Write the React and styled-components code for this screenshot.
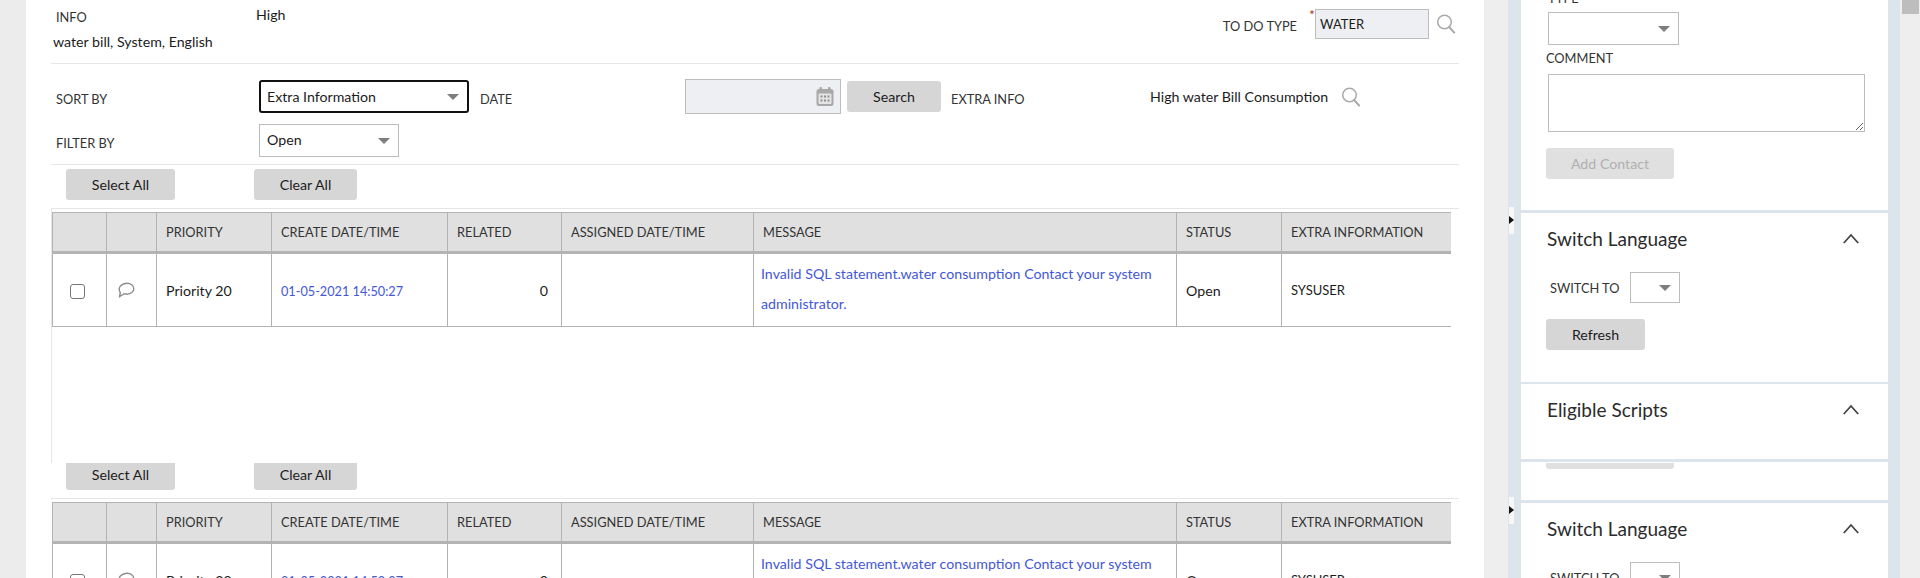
import React from "react";
import styled, { createGlobalStyle } from "styled-components";

const GlobalStyle = createGlobalStyle`
  html, body {
    margin: 0;
    padding: 0;
    height: 578px;
    overflow: hidden;
    background: #fff;
  }
  * { box-sizing: border-box; }
`;

const columns = [
  { title: "", width: 54 },
  { title: "", width: 50 },
  { title: "PRIORITY", width: 115 },
  { title: "CREATE DATE/TIME", width: 176 },
  { title: "RELATED", width: 114 },
  { title: "ASSIGNED DATE/TIME", width: 192 },
  { title: "MESSAGE", width: 423 },
  { title: "STATUS", width: 105 },
  { title: "EXTRA INFORMATION", width: 170 },
];

function SearchIcon({ $top }) {
  return (
    <SearchSvg $top={$top} viewBox="0 0 20 20" fill="none" stroke="#a9a9a9" strokeWidth="1.5">
      <circle cx="8.5" cy="8" r="6.8" />
      <path d="M13.2 13l5 5.6" strokeWidth="2" strokeLinecap="round" />
    </SearchSvg>
  );
}

function CalendarIcon() {
  return (
    <CalendarSvg viewBox="0 0 18 20">
      <rect x="0.5" y="2.5" width="17" height="17" rx="2.5" fill="#a8a8a8" />
      <rect x="3.5" y="0.5" width="2.5" height="4" rx="1" fill="#a8a8a8" />
      <rect x="12" y="0.5" width="2.5" height="4" rx="1" fill="#a8a8a8" />
      <rect x="2.5" y="7" width="13" height="10.5" rx="1" fill="#e4e4e4" />
      <path
        d="M4.5 9h2v2h-2zM8 9h2v2H8zM11.5 9h2v2h-2zM4.5 13h2v2h-2zM8 13h2v2H8zM11.5 13h2v2h-2z"
        fill="#8f8f8f"
      />
    </CalendarSvg>
  );
}

function CommentIcon() {
  return (
    <CommentSvg viewBox="0 0 18 16" fill="none" stroke="#8c8c8c" strokeWidth="1.4">
      <path d="M10 1.200c3.700 0 6.800 2.500 6.800 5.500s-3.100 5.500-6.800 5.500c-1 0-1.900-.2-2.800-.5L2.600 14.600l.7-4C2.500 9.500 2.200 8 2.200 6.700 2.200 3.700 6.300 1.200 10 1.200z" />
    </CommentSvg>
  );
}

function Chevron() {
  return (
    <ChevronSvg viewBox="0 0 16 11" fill="none" stroke="#444" strokeWidth="1.8">
      <path d="M0.8 10L8 2l7.200 8" />
    </ChevronSvg>
  );
}

function TodoTable() {
  return (
    <Table>
      <colgroup>
        {columns.map((col, i) => (
          <col key={i} style={{ width: col.width }} />
        ))}
      </colgroup>
      <thead>
        <tr>
          {columns.map((col, i) => (
            <HeadCell key={i}>{col.title}</HeadCell>
          ))}
        </tr>
      </thead>
      <tbody>
        <tr>
          <CheckCell>
            <Check />
          </CheckCell>
          <CommentCell>
            <CommentIcon />
          </CommentCell>
          <Cell>Priority 20</Cell>
          <Cell>
            <DateLink>01-05-2021 14:50:27</DateLink>
          </Cell>
          <Cell $right>0</Cell>
          <Cell />
          <MessageCell>
            <LinkText>
              Invalid SQL statement.water consumption Contact your system
              administrator.
            </LinkText>
          </MessageCell>
          <Cell>Open</Cell>
          <UserCell>SYSUSER</UserCell>
        </tr>
      </tbody>
    </Table>
  );
}

function SwitchLanguage() {
  return (
    <PanelHead>
      <PanelTitle>Switch Language</PanelTitle>
      <Chevron />
    </PanelHead>
  );
}

function App() {
  return (
    <Page>
      <GlobalStyle />
      <Gutter />
      <Main>
        <TopSection>
          <InfoBlock>
            <InfoRow>
              <InfoLabel>INFO</InfoLabel>
              <span>High</span>
            </InfoRow>
            <InfoLine>water bill, System, English</InfoLine>
          </InfoBlock>
          <TypeBlock>
            <TypeLabel>TO DO TYPE</TypeLabel>
            <Required>*</Required>
            <TypeInput>WATER</TypeInput>
            <SearchIcon $top={5} />
          </TypeBlock>
        </TopSection>

        <FilterSection>
          <SortRow>
            <RowLabel>SORT BY</RowLabel>
            <Select $width={210} $height={33} $focused>
              Extra Information
            </Select>
            <DateLabel>DATE</DateLabel>
            <DateInput>
              <CalendarIcon />
            </DateInput>
            <SearchButton>Search</SearchButton>
            <ExtraLabel>EXTRA INFO</ExtraLabel>
            <ExtraValue>High water Bill Consumption</ExtraValue>
            <SearchIcon $top={0} />
          </SortRow>
          <FilterRow>
            <RowLabel>FILTER BY</RowLabel>
            <Select $width={140} $height={33}>
              Open
            </Select>
          </FilterRow>
        </FilterSection>

        <Toolbar>
          <SelectAll>Select All</SelectAll>
          <ClearAll>Clear All</ClearAll>
        </Toolbar>

        <FirstGrid>
          <TodoTable />
        </FirstGrid>

        <Toolbar $clipped>
          <SelectAll>Select All</SelectAll>
          <ClearAll>Clear All</ClearAll>
        </Toolbar>

        <SecondGrid>
          <TodoTable />
        </SecondGrid>
      </Main>

      <Rail>
        <Cards>
          <ContactCard>
            <ClippedLabel>TYPE</ClippedLabel>
            <Select $width={131} $height={33} />
            <CommentLabel>COMMENT</CommentLabel>
            <Comment />
            <AddContact>Add Contact</AddContact>
          </ContactCard>
          <LanguageCard>
            <SwitchLanguage />
            <SwitchRow>
              <SwitchLabel>SWITCH TO</SwitchLabel>
              <Select $width={50} $height={31} />
            </SwitchRow>
            <RefreshButton>Refresh</RefreshButton>
          </LanguageCard>
          <ScriptsCard>
            <PanelHead>
              <PanelTitle>Eligible Scripts</PanelTitle>
              <Chevron />
            </PanelHead>
          </ScriptsCard>
          <ClippedCard>
            <ClippedButton />
          </ClippedCard>
          <LastCard>
            <SwitchLanguage />
            <SwitchRow>
              <SwitchLabel>SWITCH TO</SwitchLabel>
              <Select $width={50} $height={31} />
            </SwitchRow>
          </LastCard>
        </Cards>
        <Handle $top={207} />
        <Handle $top={497} />
      </Rail>

      <Scrollbar>
        <Thumb />
      </Scrollbar>
    </Page>
  );
}

export default App;

const Page = styled.div`
  display: flex;
  width: 1920px;
  height: 578px;
  overflow: hidden;
  background: #fff;
  font-family: "Lato", "Noto Sans", sans-serif;
  font-size: 14.2px;
  color: #1c1c1c;
`;

const Gutter = styled.div`
  width: 26px;
  flex: none;
  background: #ececec;
`;

const Main = styled.div`
  width: 1458px;
  flex: none;
  padding-left: 25px;
  padding-right: 25px;
  background: #fff;
`;

const TopSection = styled.section`
  height: 64px;
  display: flex;
  justify-content: space-between;
  border-bottom: 1px solid #e6e6e6;
`;

const InfoBlock = styled.div`
  display: flex;
  flex-direction: column;
  padding: 6px 0 0 2px;
`;

const InfoRow = styled.div`
  display: flex;
  line-height: 18px;
`;

const InfoLabel = styled.span`
  width: 203px;
  padding: 2px 0 0 3px;
  font-size: 12.8px;
  color: #333;
`;

const InfoLine = styled.div`
  margin-top: 7px;
  line-height: 18px;
`;

const TypeBlock = styled.div`
  display: flex;
  align-items: flex-start;
  padding-top: 9px;
  padding-right: 3px;
`;

const TypeLabel = styled.span`
  margin-top: 8px;
  line-height: 18px;
  font-size: 12.8px;
  color: #333;
`;

const Required = styled.span`
  width: 18px;
  padding-left: 12px;
  color: #a33;
  line-height: 12px;
`;

const TypeInput = styled.div`
  width: 114px;
  height: 30px;
  padding-left: 4px;
  line-height: 28px;
  margin-right: 7px;
  font-size: 13px;
  background: #eeeff2;
  border: 1px solid #bdbdbd;
`;

const SearchSvg = styled.svg`
  width: 20px;
  height: 20px;
  flex: none;
  margin-top: ${(p) => p.$top}px;
`;

const FilterSection = styled.section`
  height: 101px;
  padding-top: 15px;
  border-bottom: 1px solid #e6e6e6;
`;

const SortRow = styled.div`
  display: flex;
  align-items: center;
  height: 35px;
`;

const FilterRow = styled.div`
  display: flex;
  align-items: center;
  height: 33px;
  margin-top: 10px;
`;

const RowLabel = styled.span`
  width: 208px;
  flex: none;
  padding: 4px 0 0 5px;
  font-size: 12.8px;
  color: #333;
`;

const Select = styled.div`
  position: relative;
  width: ${(p) => p.$width}px;
  height: ${(p) => p.$height}px;
  flex: none;
  padding-left: ${(p) => (p.$focused ? "6px" : "7px")};
  line-height: ${(p) => p.$height - 3}px;
  background: #fff;
  border: ${(p) => (p.$focused ? "2px solid #111" : "1px solid #bdbdbd")};
  border-radius: ${(p) => (p.$focused ? "3px" : "0")};

  &::after {
    content: "";
    position: absolute;
    right: 8px;
    top: 50%;
    margin-top: -3px;
    border-left: 6px solid transparent;
    border-right: 6px solid transparent;
    border-top: 6px solid #7d7d7d;
  }
`;

const DateLabel = styled.span`
  width: 216px;
  flex: none;
  padding: 4px 0 0 11px;
  font-size: 12.8px;
  color: #333;
`;

const DateInput = styled.div`
  width: 156px;
  height: 35px;
  flex: none;
  display: flex;
  align-items: center;
  justify-content: flex-end;
  padding-right: 6px;
  background: #eeeff2;
  border: 1px solid #bdbdbd;
`;

const CalendarSvg = styled.svg`
  width: 18px;
  height: 21px;
`;

const Button = styled.div`
  height: 31px;
  flex: none;
  display: flex;
  align-items: center;
  justify-content: center;
  background: #d6d6d6;
  border-radius: 3px;
`;

const SearchButton = styled(Button)`
  width: 94px;
  margin-left: 6px;
`;

const ExtraLabel = styled.span`
  width: 209px;
  flex: none;
  padding: 4px 0 0 10px;
  font-size: 12.8px;
  color: #333;
`;

const ExtraValue = styled.span`
  width: 191px;
  flex: none;
`;

const Toolbar = styled.div`
  height: ${(p) => (p.$clipped ? "36px" : "44px")};
  display: flex;
  align-items: flex-start;
  padding-top: ${(p) => (p.$clipped ? "0" : "4px")};
  padding-left: 15px;
  border-bottom: 1px solid #e6e6e6;
  overflow: hidden;

  & > div {
    margin-top: ${(p) => (p.$clipped ? "-4px" : "0")};
  }
`;

const SelectAll = styled(Button)`
  width: 109px;
`;

const ClearAll = styled(Button)`
  width: 103px;
  margin-left: 79px;
`;

const FirstGrid = styled.div`
  width: 1400px;
  height: 254px;
  overflow: hidden;
  padding-top: 3px;
  border-left: 1px solid #e6e6e6;
`;

const SecondGrid = styled.div`
  width: 1400px;
  padding-top: 3px;
  padding-left: 1px;
  overflow: hidden;
`;

const Table = styled.table`
  width: 1399px;
  table-layout: fixed;
  border-collapse: collapse;
`;

const HeadCell = styled.th`
  height: 40px;
  padding: 0 0 0 9px;
  text-align: left;
  font-size: 12.8px;
  font-weight: 400;
  color: #333;
  background: #e0e0e0;
  border: 1px solid #b3b3b3;
  border-bottom: 3px solid #b3b3b3;
`;

const Cell = styled.td`
  height: 74px;
  padding: 0 ${(p) => (p.$right ? "13px" : "0")} 0 9px;
  text-align: ${(p) => (p.$right ? "right" : "left")};
  border: 1px solid #b3b3b3;
`;

const CheckCell = styled(Cell)`
  padding-left: 17px;
`;

const CommentCell = styled(Cell)`
  padding-left: 10px;
`;

const UserCell = styled(Cell)`
  font-size: 13px;
`;

const MessageCell = styled(Cell)`
  padding: 0 0 3px 7px;
  line-height: 30px;
`;

const LinkText = styled.span`
  color: #4457d8;
`;

const DateLink = styled(LinkText)`
  font-size: 12.7px;
`;

const Check = styled.span`
  display: inline-block;
  width: 15px;
  height: 15px;
  vertical-align: middle;
  border: 1px solid #767676;
  border-radius: 3px;
`;

const CommentSvg = styled.svg`
  display: block;
  width: 18px;
  height: 16px;
`;

const Rail = styled.aside`
  position: relative;
  width: 416px;
  flex: none;
  padding-left: 24px;
  background: #eeeeee;
`;

const Cards = styled.div`
  width: 392px;
  height: 578px;
  padding: 0 12px 0 13px;
  background: #dce5eb;
  overflow: hidden;
`;

const Card = styled.section`
  background: #fff;
  overflow: hidden;
`;

const ContactCard = styled(Card)`
  height: 210px;
  padding: 12px 0 0 27px;
`;

const ClippedLabel = styled.div`
  position: absolute;
  top: -11px;
  left: 64px;
  line-height: 18px;
  font-size: 12.8px;
  color: #333;
`;

const CommentLabel = styled.div`
  margin: 4px 0 7px -2px;
  line-height: 18px;
  font-size: 12.8px;
  color: #333;
`;

const Comment = styled.textarea`
  display: block;
  width: 317px;
  height: 58px;
  padding: 0;
  background: #fff;
  border: 1px solid #bdbdbd;
  border-radius: 0;
  outline: none;
`;

const AddContact = styled(Button)`
  width: 128px;
  margin: 16px 0 0 -2px;
  color: #b0b0b0;
  background: #e0e0e0;
`;

const LanguageCard = styled(Card)`
  height: 169px;
  margin-top: 3px;
  padding: 0 0 0 25px;
`;

const ScriptsCard = styled(Card)`
  height: 75px;
  margin-top: 2px;
  padding-left: 25px;
`;

const ClippedCard = styled(Card)`
  height: 38px;
  margin-top: 3px;
  padding: 1px 0 0 25px;
`;

const ClippedButton = styled.div`
  width: 128px;
  height: 6px;
  background: #e0e0e0;
  border-radius: 0 0 3px 3px;
`;

const LastCard = styled(Card)`
  height: 75px;
  margin-top: 3px;
  padding-left: 25px;
`;

const PanelHead = styled.div`
  display: flex;
  align-items: center;
  justify-content: space-between;
  height: 52px;
  padding: 0 29px 2px 1px;
`;

const PanelTitle = styled.h3`
  margin: 0;
  font-size: 19px;
  font-weight: 400;
  color: #2b2b2b;
`;

const ChevronSvg = styled.svg`
  width: 16px;
  height: 11px;
`;

const SwitchRow = styled.div`
  display: flex;
  align-items: center;
  margin-top: 7px;
`;

const SwitchLabel = styled.span`
  width: 84px;
  flex: none;
  padding-left: 4px;
  font-size: 12.8px;
  color: #333;
`;

const RefreshButton = styled(Button)`
  width: 99px;
  margin-top: 16px;
`;

const Handle = styled.div`
  position: absolute;
  top: ${(p) => p.$top}px;
  left: 25px;
  width: 5px;
  height: 27px;
  background: #f7f7f7;

  &::after {
    content: "";
    position: absolute;
    top: 9px;
    left: 0;
    border-top: 4px solid transparent;
    border-bottom: 4px solid transparent;
    border-left: 5px solid #111;
  }
`;

const Scrollbar = styled.div`
  width: 20px;
  flex: none;
  padding: 0 1px 0 2px;
  background: #eeeeee;
`;

const Thumb = styled.div`
  height: 14px;
  background: #bdbdbd;
`;
